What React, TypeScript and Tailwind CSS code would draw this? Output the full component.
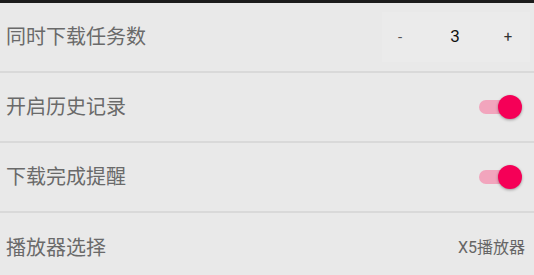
import React from "react";

const font = { fontFamily: '"Roboto", "Noto Sans CJK SC", sans-serif' };

function Toggle() {
  return (
    <div className="relative mr-[12px] h-[25px] w-[43px]">
      <div className="absolute left-0 top-[5px] h-[14px] w-[32px] rounded-full bg-[#f2a5bd]" />
      <div className="absolute right-0 top-0 h-[24px] w-[24px] rounded-full bg-[#f50057] shadow-[0_1px_3px_rgba(0,0,0,0.35)]" />
    </div>
  );
}

function Row({ label, children, last }: { label: string; children?: React.ReactNode; last?: boolean }) {
  return (
    <div
      className={`flex h-[70px] shrink-0 items-center justify-between bg-[#e9e9e9] pl-[6px] ${
        last ? "" : "border-b-2 border-[#d9d9d9] shadow-[0_1px_0_#e2e2e2]"
      }`}
    >
      <span className="text-[20px] leading-none text-[#6a6a6a]">{label}</span>
      {children}
    </div>
  );
}

export default function App() {
  return (
    <div className="h-[275px] w-[534px] overflow-hidden bg-[#e9e9e9]" style={font}>
      <div className="h-[3px] bg-[#1c1c1c]" />
      <div className="flex flex-col">
        <Row label="同时下载任务数">
          <div className="mr-[4px] flex h-[50px] w-[148px] items-center bg-[#ebebeb]">
            <span className="w-[36px] text-center text-[15px] text-[#555]">-</span>
            <span className="flex-1 pl-[6px] text-center text-[17px] text-[#111]">3</span>
            <span className="w-[44px] text-center text-[15px] text-[#333]">+</span>
          </div>
        </Row>
        <Row label="开启历史记录">
          <Toggle />
        </Row>
        <Row label="下载完成提醒">
          <Toggle />
        </Row>
        <Row label="播放器选择" last>
          <span className="mr-[9px] text-[16px] text-[#666666]">X5播放器</span>
        </Row>
      </div>
    </div>
  );
}
